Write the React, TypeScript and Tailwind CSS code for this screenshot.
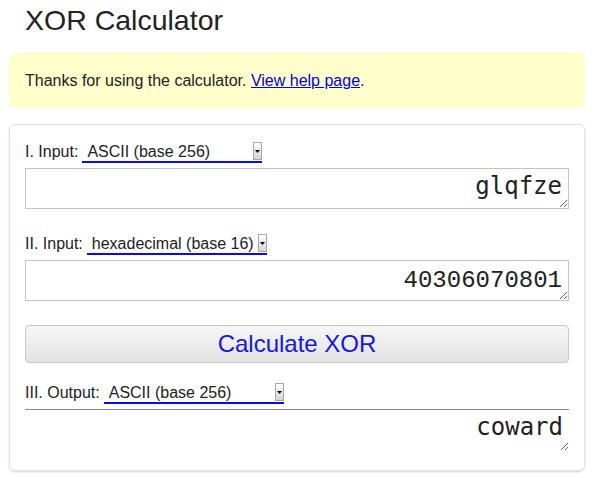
import React from "react";

function Select({ label }: { label: string }) {
  return (
    <div className="ml-1 flex h-[21px] w-[180px] items-start border-b-2 border-[#0a0aee] bg-white">
      <span className="flex-1 pl-[5px] text-[16px] leading-[20px] text-[#222]">{label}</span>
      <span className="flex h-[18px] w-[9px] items-center justify-center border border-[#a8a8a8] bg-gradient-to-b from-[#ffffff] to-[#d4d4d4]">
        <svg width="5" height="3" viewBox="0 0 5 3">
          <path d="M0 0 L5 0 L2.5 3 Z" fill="#000" />
        </svg>
      </span>
    </div>
  );
}

function Row({ label, sel }: { label: string; sel: string }) {
  return (
    <div className="flex h-[20px] items-start text-[16px] leading-[20px] text-[#222]">
      <span>{label}</span>
      <Select label={sel} />
    </div>
  );
}

export default function App() {
  const mono = { fontFamily: '"DejaVu Sans Mono", "Liberation Mono", monospace' };
  const mono2 = { fontFamily: '"Liberation Mono", "DejaVu Sans Mono", monospace' };
  return (
    <div
      className="min-h-[478px] bg-white px-[9px] pt-[4px] text-[#222]"
      style={{ fontFamily: '"Liberation Sans", Arial, sans-serif' }}
    >
      <h1 className="pl-4 text-[28.5px] font-normal leading-[33px] text-[#222]">XOR Calculator</h1>
      <div className="mt-4 rounded-[6px] bg-[#ffffcc] px-4 py-[18px] text-[16px] leading-[19px]">
        Thanks for using the calculator.{" "}
        <a href="#" className="text-[#0000ee] underline">
          View help page
        </a>
        .
      </div>
      <div className="mt-4 rounded-[6px] border border-[#e2e2e2] px-[15px] pb-[19px] pt-[17px] shadow-[0_1px_2px_rgba(0,0,0,0.18)]">
        <Row label="I. Input:" sel="ASCII (base 256)" />
        <textarea
          readOnly
          defaultValue="glqfze"
          className="mt-[6px] block h-[41px] w-full overflow-hidden border border-[#c8c3bc] bg-white px-[6px] pt-[4px] text-right text-[24px] leading-[27px] text-[#222] outline-none"
          style={mono}
        />
        <div className="mt-[25px]">
          <Row label="II. Input:" sel="hexadecimal (base 16)" />
        </div>
        <textarea
          readOnly
          defaultValue="40306070801"
          className="mt-[6px] block h-[41px] w-full overflow-hidden border border-[#c8c3bc] bg-white px-[6px] pt-[6px] text-right text-[24px] leading-[27px] text-[#222] outline-none"
          style={mono2}
        />
        <button className="mt-[24px] block h-[38px] w-full rounded-[4px] border border-[#c6c6c6] bg-gradient-to-b from-[#f6f6f6] to-[#e3e3e3] text-[24px] leading-[28px] text-[#1414f5]">
          Calculate XOR
        </button>
        <div className="mt-[20px]">
          <Row label="III. Output:" sel="ASCII (base 256)" />
        </div>
        <textarea
          readOnly
          defaultValue="coward"
          className="mt-[6px] block h-[42px] w-full overflow-hidden border-t border-[#8a8a8a] bg-white px-[6px] pt-[4px] text-right text-[24px] leading-[27px] text-[#222] outline-none"
          style={mono}
        />
      </div>
    </div>
  );
}
